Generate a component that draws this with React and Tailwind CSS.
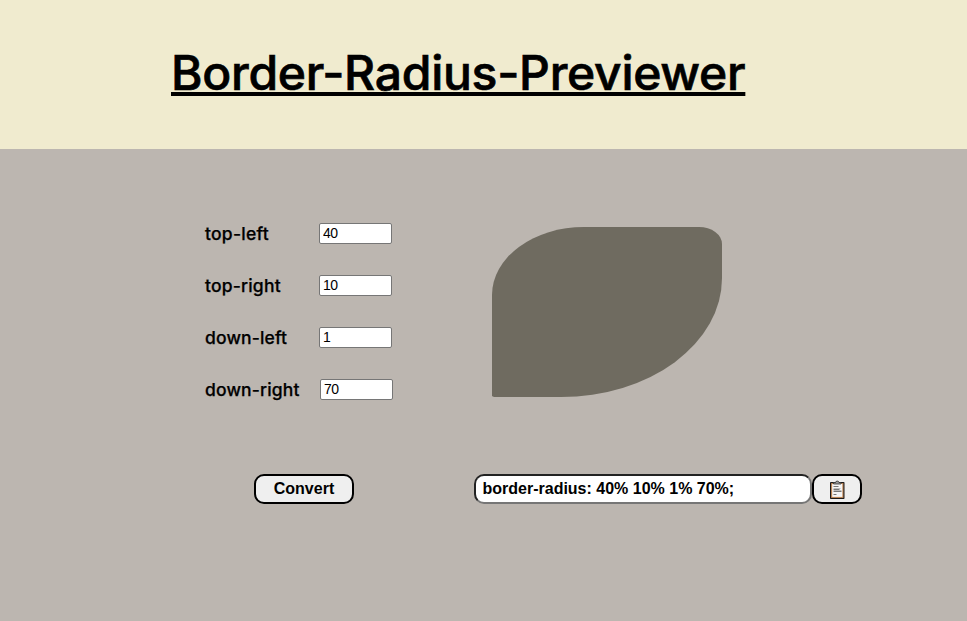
const corners = [
  { label: 'top-left', value: 40, width: 'w-[65px]', gap: 'ml-[49px]', tracking: 'tracking-[0.25px]' },
  { label: 'top-right', value: 10, width: 'w-[77px]', gap: 'ml-[37px]', tracking: 'tracking-[0.2px]' },
  { label: 'down-left', value: 1, width: 'w-[83px]', gap: 'ml-[31px]', tracking: 'tracking-[0.15px]' },
  { label: 'down-right', value: 70, width: 'w-[95px]', gap: 'ml-[20px]', tracking: 'tracking-[0.17px]' },
];

function CornerField({ label, value, width, gap, tracking }) {
  return (
    <div className="flex h-[21px] items-center">
      <label className={`${width} ${tracking} shrink-0 whitespace-nowrap font-['Inter',sans-serif] text-[17.5px] leading-[21px] font-medium [-webkit-text-stroke:0.25px_black]`}>
        {label}
      </label>
      <input
        className={`${gap} h-[21px] w-[73px] shrink-0 rounded-[2px] border border-[#767676] bg-white px-[3px] font-['Liberation_Sans',Arial,sans-serif] text-[14px] tracking-[-0.5px]`}
        defaultValue={value}
      />
    </div>
  );
}

function ClipboardIcon() {
  return (
    <svg width="16" height="20" viewBox="0 0 16 20" className="mt-[2px]" aria-hidden="true">
      <rect x="1" y="2" width="14.5" height="17" rx="0.8" fill="#1c1a1a" />
      <rect x="2.1" y="3.1" width="12.3" height="14.8" fill="#c98f5c" />
      <rect x="3.2" y="4" width="10.1" height="12.9" fill="#f5f5f5" />
      <path d="M4.5 4V2.5H6.5C6.5.6 10 .6 10 2.5H12V4z" fill="#999" stroke="#333" strokeWidth="0.8" />
      <path d="M4.5 6.5h5M4.5 9.5h6M4.5 11.5h8M4.5 14.5h3" stroke="#777" />
      <path d="M4.5 8.5h7M4.5 10.5h8" stroke="#bbb" />
    </svg>
  );
}

export default function App() {
  return (
    <div className="h-[621px] w-[967px] overflow-hidden bg-[#bcb6b0] text-black">
      <header className="flex h-[149px] bg-[#f0ebcf] pt-[43px] pl-[171px]">
        <h1 className="h-[60px] w-[574px] whitespace-nowrap font-['Inter',sans-serif] text-[48px] leading-[60px] font-medium tracking-[-0.26px] underline decoration-4 underline-offset-[2px] [-webkit-text-stroke:0.7px_black] [text-decoration-skip-ink:none]">
          Border-Radius-Previewer
        </h1>
      </header>
      <main>
        <section className="flex pt-[74px] pl-[205px]">
          <div className="flex w-[287px] flex-col gap-[31px]">
            {corners.map((corner) => (
              <CornerField key={corner.label} {...corner} />
            ))}
          </div>
          <div className="mt-[4px] h-[170px] w-[230px] rounded-[40%_10%_70%_1%] bg-[#6f6b60]" />
        </section>
        <section className="flex pt-[74px] pl-[254px] font-['Liberation_Sans',Arial,sans-serif] text-[16px] font-bold">
          <button className="h-[30px] w-[100px] rounded-[10px] border-2 border-black bg-[#efefef] leading-[26px]">
            Convert
          </button>
          <input
            className="ml-[120px] h-[30px] w-[338px] rounded-[10px] border-2 border-t-[#222] border-r-[#767676] border-b-[#767676] border-l-[#222] bg-white px-[6.5px]"
            defaultValue="border-radius: 40% 10% 1% 70%;"
          />
          <button aria-label="Copy" className="flex h-[30px] w-[50px] items-center justify-center rounded-[10px] border-2 border-black bg-[#efefef]">
            <ClipboardIcon />
          </button>
        </section>
      </main>
    </div>
  );
}
